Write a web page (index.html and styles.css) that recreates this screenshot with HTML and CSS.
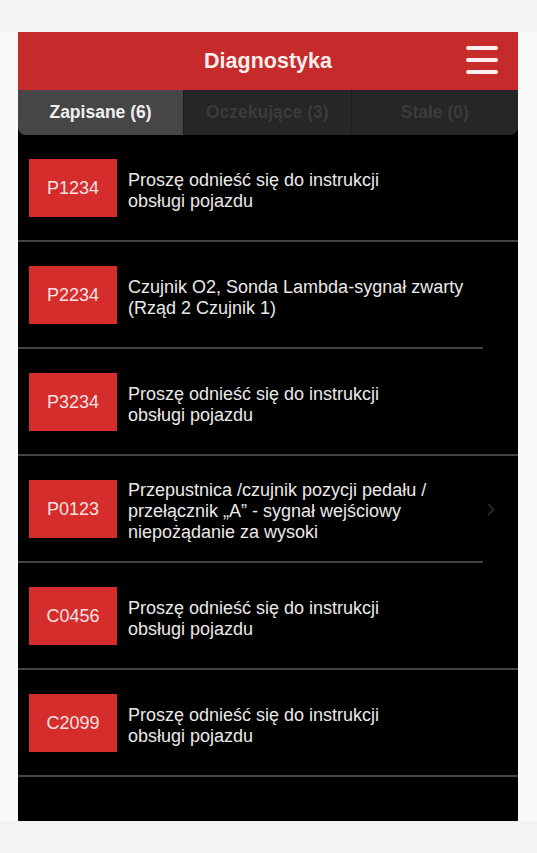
FILE: index.html
```html
<!DOCTYPE html>
<html lang="pl">
<head>
    <meta charset="UTF-8">
    <title>Diagnostyka</title>
    <link rel="stylesheet" href="styles.css">
</head>
<body>
    <div class="band"></div>

    <div class="stage">
        <div class="phone">
            <div class="header">
                <h1>Diagnostyka</h1>
                <div class="menu">
                    <span></span>
                    <span></span>
                    <span></span>
                </div>
            </div>

            <div class="tabs">
                <div class="tab active">Zapisane (6)</div>
                <div class="tab">Oczekujące (3)</div>
                <div class="tab">Stałe (0)</div>
            </div>

            <div class="list">
                <div class="row">
                    <div class="row-main">
                        <div class="code">P1234</div>
                        <div class="desc">Proszę odnieść się do instrukcji<br>obsługi pojazdu</div>
                    </div>
                </div>
                <div class="row short">
                    <div class="row-main">
                        <div class="code">P2234</div>
                        <div class="desc">Czujnik O2, Sonda Lambda-sygnał zwarty<br>(Rząd 2 Czujnik 1)</div>
                    </div>
                </div>
                <div class="row">
                    <div class="row-main">
                        <div class="code">P3234</div>
                        <div class="desc">Proszę odnieść się do instrukcji<br>obsługi pojazdu</div>
                    </div>
                </div>
                <div class="row short">
                    <div class="row-main">
                        <div class="code">P0123</div>
                        <div class="desc">Przepustnica /czujnik pozycji pedału /<br>przełącznik „A” - sygnał wejściowy<br>niepożądanie za wysoki</div>
                        <svg class="chevron" width="8" height="13" viewBox="0 0 8 13">
                            <polyline points="1,1 6.5,6.5 1,12" fill="none" stroke="#262626" stroke-width="2"/>
                        </svg>
                    </div>
                </div>
                <div class="row">
                    <div class="row-main">
                        <div class="code">C0456</div>
                        <div class="desc">Proszę odnieść się do instrukcji<br>obsługi pojazdu</div>
                    </div>
                </div>
                <div class="row">
                    <div class="row-main">
                        <div class="code">C2099</div>
                        <div class="desc">Proszę odnieść się do instrukcji<br>obsługi pojazdu</div>
                    </div>
                </div>
            </div>
        </div>
    </div>

    <div class="band bottom"></div>
</body>
</html>
```

FILE: styles.css
```css
html, body {
    margin: 0;
    height: 100%;
}
body {
    font-family: "Liberation Sans", Arial, sans-serif;
    background: #f2f3f5;
    display: flex;
    flex-direction: column;
}
.band {
    height: 32px;
    background: #f2f3f5;
}
.band.bottom {
    flex: 1;
}
.stage {
    background: #fafafa;
    padding-left: 18px;
}
.phone {
    width: 500px;
    height: 789px;
    background: #000;
    display: flex;
    flex-direction: column;
}
.header {
    height: 58px;
    background: #c72a2b;
    display: flex;
    align-items: center;
    justify-content: center;
    position: relative;
}
.header h1 {
    margin: 0;
    color: #fbeeee;
    font-size: 21.5px;
    font-weight: bold;
}
.menu {
    position: absolute;
    right: 20px;
    top: 14px;
    width: 32px;
    display: flex;
    flex-direction: column;
    gap: 8px;
}
.menu span {
    display: block;
    height: 4px;
    border-radius: 2px;
    background: #fbeeee;
}
.tabs {
    height: 45px;
    display: flex;
    background: #262626;
    border-radius: 0 0 8px 8px;
    overflow: hidden;
}
.tab {
    flex: 1;
    display: flex;
    align-items: center;
    justify-content: center;
    font-size: 17.5px;
    font-weight: bold;
    color: #3b3b3b;
    border-left: 1px solid #1c1c1c;
}
.tab:first-child {
    border-left: none;
}
.tab.active {
    flex: 0 0 165px;
    background: #464646;
    color: #f0f0f0;
}
.row::after {
    content: '';
    display: block;
    height: 2px;
    background: #444;
}
.row.short::after {
    width: 465px;
}
.row-main {
    height: 58px;
    display: flex;
    align-items: center;
    gap: 11px;
    padding: 24px 23px 23px 11px;
}
.code {
    flex: 0 0 88px;
    height: 58px;
    background: #d52c2c;
    color: #f8e2e2;
    font-size: 18px;
    display: flex;
    align-items: center;
    justify-content: center;
}
.desc {
    flex: 1;
    padding-top: 5px;
    color: #e9e9e9;
    font-size: 18px;
    line-height: 21px;
}
.chevron {
    flex: 0 0 auto;
}
```
